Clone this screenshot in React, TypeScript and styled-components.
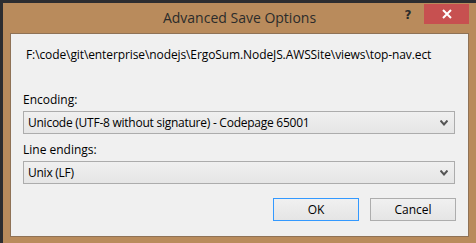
import React from 'react'
import styled, { createGlobalStyle } from 'styled-components'

const GlobalStyle = createGlobalStyle`
  html, body {
    margin: 0;
    padding: 0;
    background: #2d2d30;
    overflow: hidden;
  }
  body {
    font-family: "Open Sans", "Noto Sans", sans-serif;
    -webkit-font-smoothing: antialiased;
  }
`

const Backdrop = styled.div`
  width: 476px;
  height: 243px;
  padding: 3px 0 0 3px;
  box-sizing: border-box;
`

const Window = styled.div`
  width: 473px;
  height: 240px;
  background: #b98b5c;
  padding: 0 7px 6px 7px;
  box-sizing: border-box;
  display: flex;
  flex-direction: column;
`

const TitleBar = styled.div`
  height: 30px;
  display: grid;
  grid-template-columns: 1fr auto 1fr;
  align-items: start;
  flex-shrink: 0;
`

const Title = styled.div`
  grid-column: 2;
  font-size: 14px;
  line-height: 30px;
  color: #2b2b2b;
  white-space: nowrap;
`

const TitleControls = styled.div`
  grid-column: 3;
  justify-self: end;
  display: flex;
  align-items: flex-start;
  padding-top: 1px;
`

const HelpButton = styled.div`
  width: 22px;
  height: 20px;
  margin-right: 5px;
  font-family: "DejaVu Sans", sans-serif;
  font-weight: bold;
  font-size: 12px;
  line-height: 22px;
  text-align: center;
  color: #2b2b2b;
`

const CloseButton = styled.div`
  width: 45px;
  height: 20px;
  background: #c75050;
  display: flex;
  align-items: center;
  justify-content: center;
`

const Client = styled.div`
  flex: 1;
  background: #f0f0f0;
  border: 1px solid #8f7256;
  padding: 13px 12px 0 12px;
  box-sizing: border-box;
  display: flex;
  flex-direction: column;
  font-size: 12px;
  color: #000;
`

const PathText = styled.div`
  padding-left: 3px;
  line-height: 16px;
  letter-spacing: -0.1px;
  white-space: nowrap;
  margin-bottom: 29px;
`

const Label = styled.div`
  line-height: 16px;
  margin-bottom: 3px;
`

const Field = styled.div`
  display: flex;
  flex-direction: column;
  margin-bottom: 8px;
`

const Select = styled.div`
  width: 432px;
  height: 23px;
  box-sizing: border-box;
  border: 1px solid #acacac;
  background: linear-gradient(#f0f0f0, #e5e5e5);
  display: flex;
  align-items: center;
  padding: 0 6px 0 4px;
`

const SelectValue = styled.span`
  flex: 1;
  white-space: nowrap;
  letter-spacing: -0.25px;
`

const ButtonRow = styled.div`
  display: flex;
  justify-content: flex-end;
  gap: 11px;
  margin-top: 6px;
`

const DialogButton = styled.div<{ $default?: boolean }>`
  width: 86px;
  height: 23px;
  box-sizing: border-box;
  border: 1px solid ${p => (p.$default ? '#3399ff' : '#adadad')};
  background: linear-gradient(#f0f0f0, #e5e5e5);
  display: flex;
  align-items: center;
  justify-content: center;
`

function Chevron() {
  return (
    <svg width="8" height="6" viewBox="0 0 8 6">
      <path d="M0.5 0.5 L4 4.5 L7.5 0.5" fill="none" stroke="#555" strokeWidth="2" />
    </svg>
  )
}

function CloseGlyph() {
  return (
    <svg width="10" height="10" viewBox="0 0 10 10">
      <path d="M1 1 L9 9 M9 1 L1 9" stroke="#fff" strokeWidth="2" />
    </svg>
  )
}

function Dropdown({ value }: { value: string }) {
  return (
    <Select>
      <SelectValue>{value}</SelectValue>
      <Chevron />
    </Select>
  )
}

export default function App() {
  return (
    <Backdrop>
      <GlobalStyle />
      <Window>
        <TitleBar>
          <Title>Advanced Save Options</Title>
          <TitleControls>
            <HelpButton>?</HelpButton>
            <CloseButton><CloseGlyph /></CloseButton>
          </TitleControls>
        </TitleBar>
        <Client>
          <PathText>F:\code\git\enterprise\nodejs\ErgoSum.NodeJS.AWSSite\views\top-nav.ect</PathText>
          <Field>
            <Label>Encoding:</Label>
            <Dropdown value="Unicode (UTF-8 without signature) - Codepage 65001" />
          </Field>
          <Field>
            <Label>Line endings:</Label>
            <Dropdown value="Unix (LF)" />
          </Field>
          <ButtonRow>
            <DialogButton $default>OK</DialogButton>
            <DialogButton>Cancel</DialogButton>
          </ButtonRow>
        </Client>
      </Window>
    </Backdrop>
  )
}
